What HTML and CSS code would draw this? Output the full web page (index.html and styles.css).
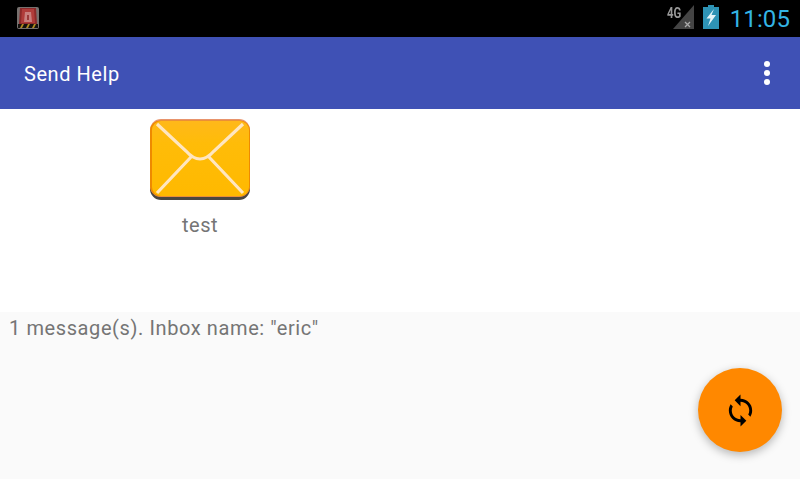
FILE: index.html
```html
<!DOCTYPE html>
<html lang="en">
<head>
  <meta charset="UTF-8" />
  <title>Send Help</title>
  <link rel="stylesheet" href="styles.css">
</head>
<body>
  <div class="screen">
    <!-- status bar -->
    <div class="status-bar">
      <svg class="app-icon" width="22" height="22" viewBox="0 0 22 22">
        <rect x="0" y="0" width="22" height="22" rx="2" fill="#77716f" />
        <path d="M3 1h16l1 16H2z" fill="#8c2a2a" />
        <path d="M5 2h12l1 14H4z" fill="#b03c3a" />
        <path d="M8 5h6l1 10H7z" fill="#c9807e" />
        <path d="M10 8h2v5h-2z" fill="#9c3a3a" />
        <rect x="1" y="17" width="20" height="4" fill="#14120e" />
        <path d="M3 21l2-4h2l-2 4zM9 21l2-4h2l-2 4zM15 21l2-4h2l-2 4z" fill="#b08a20" />
      </svg>
      <div class="status-right">
        <div class="signal">
          <span class="signal-label">4G</span>
          <svg class="signal-icon" width="21" height="24" viewBox="0 0 21 24">
            <path d="M21 0v24H0z" fill="#444" />
            <path d="M12 17l5 5M17 17l-5 5" stroke="#aaa" stroke-width="1.3" />
          </svg>
        </div>
        <svg class="battery" width="16" height="24" viewBox="0 0 16 24">
          <path d="M5 0h6v2h5v22H0V2h5z" fill="#2e93b5" />
          <path d="M11 4L3.5 13.5h4L5 21l8-11h-4.5z" fill="#e4f4f8" />
        </svg>
        <span class="clock">11:05</span>
      </div>
    </div>

    <!-- app bar -->
    <header class="app-bar">
      <span class="app-title">Send Help</span>
      <div class="overflow-menu">
        <span class="dot"></span>
        <span class="dot"></span>
        <span class="dot"></span>
      </div>
    </header>

    <!-- messages -->
    <main class="message-grid">
      <div class="message">
        <svg class="envelope" width="100" height="82" viewBox="0 0 100 82">
          <defs>
            <linearGradient id="env" x1="0" y1="0" x2="0" y2="1">
              <stop offset="0" stop-color="#ffb81a" />
              <stop offset="0.3" stop-color="#ffbc08" />
              <stop offset="1" stop-color="#ffb900" />
            </linearGradient>
          </defs>
          <rect x="0" y="4" width="100" height="77" rx="11" fill="#4a4640" />
          <rect x="0" y="0" width="100" height="78" rx="11" fill="#e8946c" />
          <rect x="0" y="1.5" width="100" height="76" rx="10" fill="#ee8a00" />
          <rect x="2" y="2" width="97" height="75" rx="9" fill="url(#env)" />
          <path d="M7 5L36 32Q50 48 64 32L93 5M42 37L7 74M58 37L93 74" fill="none" stroke="#ffe6c0" stroke-width="3.2" />
        </svg>
        <span class="message-name">test</span>
      </div>
    </main>

    <!-- inbox info -->
    <section class="inbox-info">1 message(s). Inbox name: "eric"</section>

    <button class="fab" type="button">
      <svg width="35" height="35" viewBox="0 0 24 24">
        <path d="M12 4V1L8 5l4 4V6c3.31 0 6 2.69 6 6 0 1.01-.25 1.97-.7 2.8l1.46 1.46C19.54 15.03 20 13.57 20 12c0-4.42-3.58-8-8-8zm0 14c-3.31 0-6-2.69-6-6 0-1.01.25-1.97.7-2.8L5.24 7.74C4.46 8.97 4 10.43 4 12c0 4.42 3.58 8 8 8v3l4-4-4-4v3z" />
      </svg>
    </button>
  </div>
</body>
</html>
```

FILE: styles.css
```css
body {
  margin: 0;
  font-family: Roboto, sans-serif;
}
.screen {
  position: relative;
  display: flex;
  flex-direction: column;
  width: 800px;
  height: 479px;
  overflow: hidden;
  background: #fafafa;
}
.status-bar {
  display: flex;
  flex: none;
  align-items: center;
  justify-content: space-between;
  height: 37px;
  padding: 0 10px 0 17px;
  box-sizing: border-box;
  background: #000;
}
.app-icon {
  display: block;
  margin-bottom: 2px;
}
.status-right {
  display: flex;
  align-items: center;
}
.signal {
  position: relative;
  display: flex;
  justify-content: flex-end;
  width: 27px;
  margin-right: 9px;
  margin-bottom: 3px;
}
.signal-icon {
  display: block;
}
.signal-label {
  position: absolute;
  top: -1px;
  left: 0;
  color: #999;
  font-size: 15px;
  font-weight: 700;
  transform: scaleX(0.76);
  transform-origin: left;
}
.battery {
  display: block;
  margin-right: 11px;
  margin-bottom: 3px;
}
.clock {
  color: #33b5e5;
  font-size: 24px;
  letter-spacing: 0.1px;
}
.app-bar {
  display: flex;
  flex: none;
  align-items: center;
  justify-content: space-between;
  height: 72px;
  padding: 0 30px 0 24px;
  box-sizing: border-box;
  background: #3f51b5;
}
.app-title {
  margin-top: 2px;
  color: #fff;
  font-size: 20px;
  letter-spacing: 0.55px;
}
.overflow-menu {
  display: flex;
  flex-direction: column;
  gap: 3px;
}
.dot {
  width: 6px;
  height: 6px;
  border-radius: 50%;
  background: #fff;
}
.message-grid {
  display: grid;
  flex: none;
  grid-template-columns: repeat(4, 200px);
  height: 203px;
  padding-top: 10px;
  box-sizing: border-box;
  background: #fff;
}
.message {
  display: flex;
  flex-direction: column;
  align-items: center;
  grid-column: 1;
  margin-left: 100px;
  width: 200px;
}
.envelope {
  display: block;
  filter: blur(0.5px);
}
.message-name {
  margin-top: 12px;
  color: #757575;
  font-size: 20px;
  letter-spacing: 0.55px;
}
.inbox-info {
  padding: 4px 9px;
  color: #757575;
  font-size: 20px;
  letter-spacing: 0.6px;
}
.fab {
  position: absolute;
  right: 18px;
  bottom: 27px;
  display: flex;
  align-items: center;
  justify-content: center;
  width: 84px;
  height: 84px;
  padding: 0;
  border: none;
  border-radius: 50%;
  background: #ff8800;
  box-shadow: 0 3px 10px rgba(0,0,0,0.28);
}
```
